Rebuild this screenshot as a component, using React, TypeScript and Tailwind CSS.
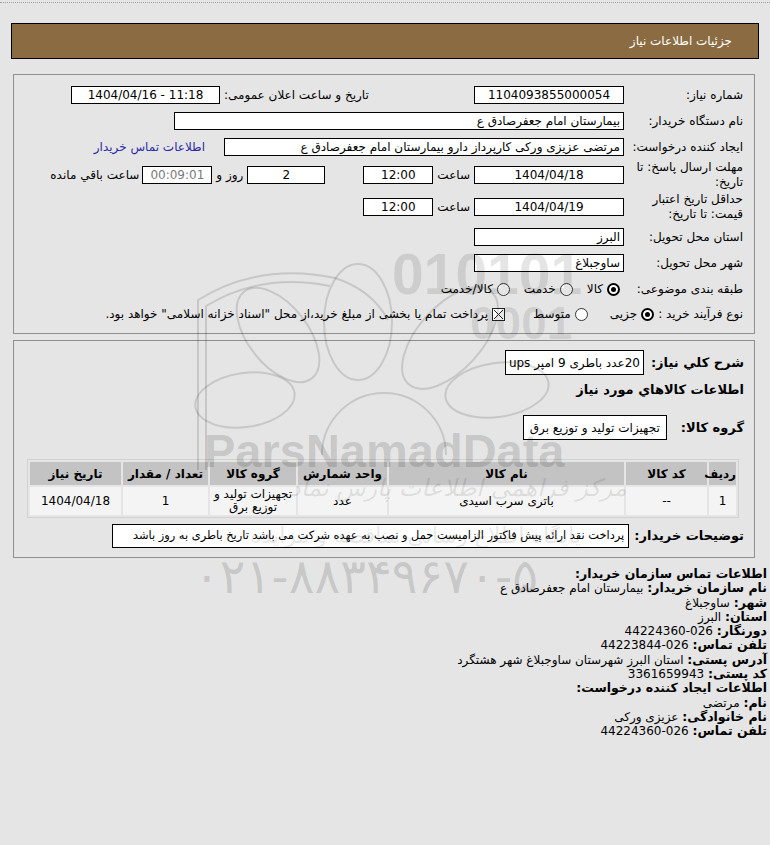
import React from "react";

const Field = ({ className = "", children }: { className?: string; children?: React.ReactNode }) => (
  <div className={`h-[18px] shrink-0 border border-black bg-white flex items-center whitespace-nowrap leading-none ${className}`}>
    {children}
  </div>
);

const Radio = ({ checked }: { checked?: boolean }) =>
  checked ? (
    <span className="w-[13px] h-[13px] shrink-0 rounded-full border-2 border-black bg-white flex items-center justify-center">
      <span className="w-[5px] h-[5px] rounded-full bg-black" />
    </span>
  ) : (
    <span className="w-[13px] h-[13px] shrink-0 rounded-full border border-[#333] bg-white" />
  );

const CheckX = () => (
  <svg width="13" height="13" viewBox="0 0 13 13" className="shrink-0">
    <rect x="0.5" y="0.5" width="12" height="12" fill="#fff" stroke="#222" />
    <path d="M2 2 L11 11 M11 2 L2 11" stroke="#222" strokeWidth="1" />
  </svg>
);

const Watermark = () => (
  <div className="absolute inset-0 pointer-events-none" dir="ltr">
    <svg className="absolute left-0 top-0" width="770" height="845" fill="none" stroke="rgba(0,0,0,0.13)" strokeWidth="2">
      {/* book */}
      <path d="M198 470 L198 300 Q260 262 335 278 Q372 290 388 320" />
      <path d="M206 470 L206 306 Q262 272 330 286" />
      {/* petals */}
      <ellipse cx="245" cy="400" rx="50" ry="27" transform="rotate(-8 245 400)" />
      <ellipse cx="278" cy="335" rx="30" ry="55" transform="rotate(-38 278 335)" />
      <ellipse cx="358" cy="322" rx="34" ry="58" />
      <ellipse cx="450" cy="338" rx="32" ry="62" transform="rotate(42 450 338)" />
      <ellipse cx="497" cy="390" rx="52" ry="27" transform="rotate(-8 497 390)" />
      <path d="M322 455 A62 62 0 0 1 446 455" />
    </svg>
    <div className="absolute left-[392px] top-[246px] font-['Liberation_Sans',sans-serif] font-bold text-[57px] leading-none text-black/10">
      010101
    </div>
    <div className="absolute left-[470px] top-[300px] font-['Liberation_Sans',sans-serif] font-bold text-[46px] leading-none text-black/10">
      0001
    </div>
    <div className="absolute left-[204px] top-[427px] font-['Liberation_Sans',sans-serif] font-bold text-[47px] leading-none text-black/15">
      ParsNamadData
    </div>
    <div className="absolute left-[290px] top-[476px] font-['DejaVu_Sans',sans-serif] italic text-[24px] leading-none text-black/10" dir="rtl">
      مرکز فراهمی اطلاعات پارس نماد
    </div>
    <div className="absolute left-[250px] top-[525px] font-['DejaVu_Sans',sans-serif] text-[22px] leading-none text-black/10" dir="rtl">
      پایگاه اطلاع رسانی مناقصه و مزایده
    </div>
    <div className="absolute left-[194px] top-[552px] font-['DejaVu_Sans',sans-serif] text-[48px] leading-none text-black/15">
      ۰۲۱-۸۸۳۴۹۶۷۰-۵
    </div>
  </div>
);

export default function App() {
  return (
    <div
      dir="rtl"
      className="relative min-h-[845px] overflow-hidden bg-[#e5e5e5] font-['DejaVu_Sans',sans-serif] text-[12px] text-black"
    >
      <div className="h-[2px]" />
      <div className="border-t border-dotted border-[#9c9c9c]" />

      {/* title bar */}
      <div className="mx-[11px] mt-[20px] h-[36px] border border-black bg-[#8b6c42] flex items-center pr-[26px] text-white text-[12px]">
        جزئیات اطلاعات نیاز
      </div>

      {/* main info panel */}
      <div className="ml-[13px] mr-[15px] mt-[15px] border border-[#8f8f8f] pt-[7px] pb-[7px] pr-[11px]">
        <div className="flex items-center h-[26px]">
          <div className="w-[119px] shrink-0">شماره نیاز:</div>
          <Field className="w-[150px] justify-center">
            <span dir="ltr">1104093855000054</span>
          </Field>
          <div className="w-[254px] shrink-0 flex justify-end pl-[4px]">تاریخ و ساعت اعلان عمومی:</div>
          <Field className="w-[149px] justify-center">
            <span dir="ltr">1404/04/16 - 11:18</span>
          </Field>
        </div>

        <div className="flex items-center h-[26px]">
          <div className="w-[119px] shrink-0">نام دستگاه خریدار:</div>
          <Field className="w-[450px] pr-[3px]">بیمارستان امام جعفرصادق ع</Field>
        </div>

        <div className="flex items-center h-[26px]">
          <div className="w-[119px] shrink-0">ایجاد کننده درخواست:</div>
          <Field className="w-[400px] pr-[3px]">مرتضی عزیزی ورکی کارپرداز دارو بیمارستان امام جعفرصادق ع</Field>
          <a className="mr-[19px] text-[#2b2ba8]">اطلاعات تماس خریدار</a>
        </div>

        <div className="flex items-center h-[30px]">
          <div className="w-[119px] shrink-0 leading-[15px]">
            مهلت ارسال پاسخ: تا
            <br />
            تاریخ:
          </div>
          <Field className="w-[150px] justify-center">
            <span dir="ltr">1404/04/18</span>
          </Field>
          <span className="mx-[4px]">ساعت</span>
          <Field className="w-[70px] justify-center">12:00</Field>
          <Field className="mr-[38px] w-[78px] justify-center">2</Field>
          <span className="mx-[4px]">روز و</span>
          <Field className="w-[70px] justify-center border-[#9a9a9a] bg-[#ffffea] text-[#7a7a7a]">00:09:01</Field>
          <span className="mr-[3px]">ساعت باقي مانده</span>
        </div>

        <div className="flex items-center h-[34px]">
          <div className="w-[119px] shrink-0 leading-[15px]">
            حداقل تاریخ اعتبار
            <br />
            قیمت: تا تاریخ:
          </div>
          <Field className="w-[150px] justify-center">
            <span dir="ltr">1404/04/19</span>
          </Field>
          <span className="mx-[4px]">ساعت</span>
          <Field className="w-[70px] justify-center">12:00</Field>
        </div>

        <div className="flex items-center h-[26px]">
          <div className="w-[119px] shrink-0">استان محل تحویل:</div>
          <Field className="w-[150px] pr-[3px]">البرز</Field>
        </div>

        <div className="flex items-center h-[26px]">
          <div className="w-[119px] shrink-0">شهر محل تحویل:</div>
          <Field className="w-[150px] pr-[3px]">ساوجبلاغ</Field>
        </div>

        <div className="flex items-center h-[26px]">
          <div className="w-[119px] shrink-0">طبقه بندی موضوعی:</div>
          <div className="flex items-center mr-[4px]">
            <Radio checked />
            <span className="mr-[4px]">کالا</span>
            <span className="mr-[14px]" />
            <Radio />
            <span className="mr-[4px]">خدمت</span>
            <span className="mr-[14px]" />
            <Radio />
            <span className="mr-[4px]">کالا/خدمت</span>
          </div>
        </div>

        <div className="flex items-center h-[24px]">
          <div className="shrink-0">نوع فرآیند خرید :</div>
          <div className="flex items-center mr-[4px]">
            <Radio checked />
            <span className="mr-[4px]">جزیی</span>
            <span className="mr-[22px]" />
            <Radio />
            <span className="mr-[4px]">متوسط</span>
            <span className="mr-[28px]" />
            <CheckX />
            <span className="mr-[4px] whitespace-nowrap">
              پرداخت تمام یا بخشی از مبلغ خرید،از محل "اسناد خزانه اسلامی" خواهد بود.
            </span>
          </div>
        </div>
      </div>

      {/* items panel */}
      <div className="ml-[13px] mr-[15px] mt-[6px] border border-[#8f8f8f] pt-[9px] pb-[9px]">
        <div className="flex items-center pr-[10px]">
          <div className="text-[13px] font-bold">شرح کلي نیاز:</div>
          <div className="mr-[7px] h-[25px] border border-black bg-white flex items-center px-[3px]">
            20عدد باطری 9 امپر ups
          </div>
        </div>

        <div className="pr-[10px] mt-[7px] text-[13px] font-bold leading-[16px]">اطلاعات کالاهاي مورد نیاز</div>

        <div className="flex items-center pr-[10px] mt-[17px]">
          <div className="text-[13px] font-bold">گروه کالا:</div>
          <div className="mr-[14px] h-[25px] border border-black bg-white flex items-center px-[6px]">
            تجهیزات تولید و توزیع برق
          </div>
        </div>

        <div className="mr-[15px] ml-[13px] mt-[19px]">
          <table className="w-full table-fixed border-separate border-spacing-[2px] border border-[#d2d2d2] text-center">
            <colgroup>
              <col className="w-[27px]" />
              <col className="w-[81px]" />
              <col />
              <col className="w-[89px]" />
              <col className="w-[86px]" />
              <col className="w-[85px]" />
              <col className="w-[91px]" />
            </colgroup>
            <thead>
              <tr className="h-[23px] font-bold">
                <th className="bg-[#c3c3c3] font-bold px-0">ردیف</th>
                <th className="bg-[#c3c3c3] font-bold">کد کالا</th>
                <th className="bg-[#c3c3c3] font-bold">نام کالا</th>
                <th className="bg-[#c3c3c3] font-bold">واحد شمارش</th>
                <th className="bg-[#c3c3c3] font-bold">گروه کالا</th>
                <th className="bg-[#c3c3c3] font-bold">تعداد / مقدار</th>
                <th className="bg-[#c3c3c3] font-bold">تاریخ نیاز</th>
              </tr>
            </thead>
            <tbody>
              <tr className="h-[28px] leading-[13px]">
                <td className="bg-[#f4f4f4]">1</td>
                <td className="bg-[#f4f4f4]">--</td>
                <td className="bg-[#f4f4f4]">باتری سرب اسیدی</td>
                <td className="bg-[#f4f4f4]">عدد</td>
                <td className="bg-[#f4f4f4]">
                  تجهیزات تولید و
                  <br />
                  توزیع برق
                </td>
                <td className="bg-[#f4f4f4]">1</td>
                <td className="bg-[#f4f4f4]">
                  <span dir="ltr">1404/04/18</span>
                </td>
              </tr>
            </tbody>
          </table>
        </div>

        <div className="flex items-center pr-[10px] mt-[6px]">
          <div className="text-[13px] font-bold">توضیحات خریدار:</div>
          <div className="mr-[5px] w-[517px] h-[24px] border border-black bg-white flex items-center pr-[4px] whitespace-nowrap text-[11.4px]">
            پرداخت نقد ارائه پیش فاکتور الزامیست حمل و نصب به عهده شرکت می باشد تاریخ باطری به روز باشد
          </div>
        </div>
      </div>

      {/* contact info */}
      <div className="pr-[3px] mt-[9px] text-[12px] leading-[14.3px]">
        <div className="font-bold text-[12.5px]">اطلاعات تماس سازمان خریدار:</div>
        <div>
          <b className="text-[12.5px]">نام سازمان خریدار:</b> بیمارستان امام جعفرصادق ع
        </div>
        <div>
          <b className="text-[12.5px]">شهر:</b> ساوجبلاغ
        </div>
        <div>
          <b className="text-[12.5px]">استان:</b> البرز
        </div>
        <div>
          <b className="text-[12.5px]">دورنگار:</b> 026-44224360
        </div>
        <div>
          <b className="text-[12.5px]">تلفن تماس:</b> 026-44223844
        </div>
        <div>
          <b className="text-[12.5px]">آدرس پستی:</b> استان البرز شهرستان ساوجبلاغ شهر هشتگرد
        </div>
        <div>
          <b className="text-[12.5px]">کد پستی:</b> 3361659943
        </div>
        <div className="font-bold text-[12.5px]">اطلاعات ایجاد کننده درخواست:</div>
        <div>
          <b className="text-[12.5px]">نام:</b> مرتضی
        </div>
        <div>
          <b className="text-[12.5px]">نام خانوادگی:</b> عزیزی ورکی
        </div>
        <div>
          <b className="text-[12.5px]">تلفن تماس:</b> 026-44224360
        </div>
      </div>

      <Watermark />
    </div>
  );
}
